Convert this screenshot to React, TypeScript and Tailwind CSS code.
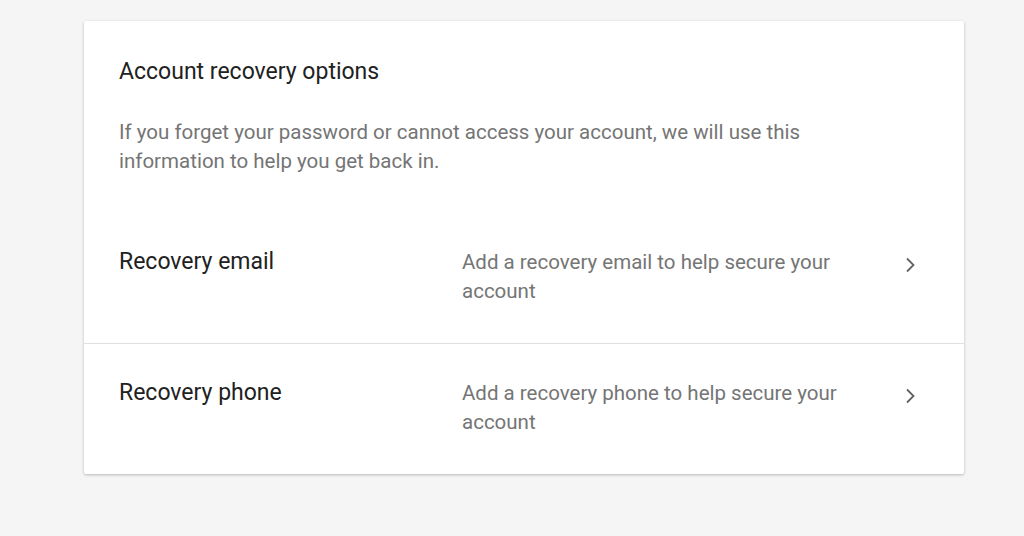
import React from "react";

function Chevron() {
  return (
    <svg width="24" height="24" viewBox="0 0 24 24" className="text-[#5f6368]">
      <path d="M9 5.5l6.5 6.5-6.5 6.5" fill="none" stroke="currentColor" strokeWidth="1.8" />
    </svg>
  );
}

function Row({ label, desc, border }: { label: string; desc: string; border?: boolean }) {
  return (
    <div className={`flex items-start pl-[35px] pr-[40px] pt-[35px] ${border ? "h-[131px] border-t border-[#e0e0e0]" : "h-[130px]"}`}>
      <div className="w-[343px] shrink-0 text-[23px] leading-[29px] text-[#212121] -mt-[1px]">{label}</div>
      <div className="w-[400px] shrink-0 text-[20.5px] leading-[29px] text-[#757575]">{desc}</div>
      <div className="flex-1 flex justify-end pt-[5px] pr-[2px]">
        <Chevron />
      </div>
    </div>
  );
}

export default function App() {
  return (
    <div className="w-[1024px] h-[536px] bg-[#f5f5f5] pt-[21px] pl-[84px]" style={{ fontFamily: "Roboto, 'Liberation Sans', sans-serif" }}>
      <div className="w-[880px] bg-white rounded-[2px] shadow-[0_1px_3px_rgba(0,0,0,0.25)]">
        <div className="pl-[35px] pr-[40px] pt-[36px] pb-[37px]">
          <div className="text-[23px] leading-[30px] text-[#212121]">Account recovery options</div>
          <div className="mt-[31px] text-[20.5px] leading-[29px] text-[#757575] w-[700px]">
            If you forget your password or cannot access your account, we will use this information to help you get back in.
          </div>
        </div>
        <Row label="Recovery email" desc="Add a recovery email to help secure your account" />
        <Row label="Recovery phone" desc="Add a recovery phone to help secure your account" border />
      </div>
    </div>
  );
}
